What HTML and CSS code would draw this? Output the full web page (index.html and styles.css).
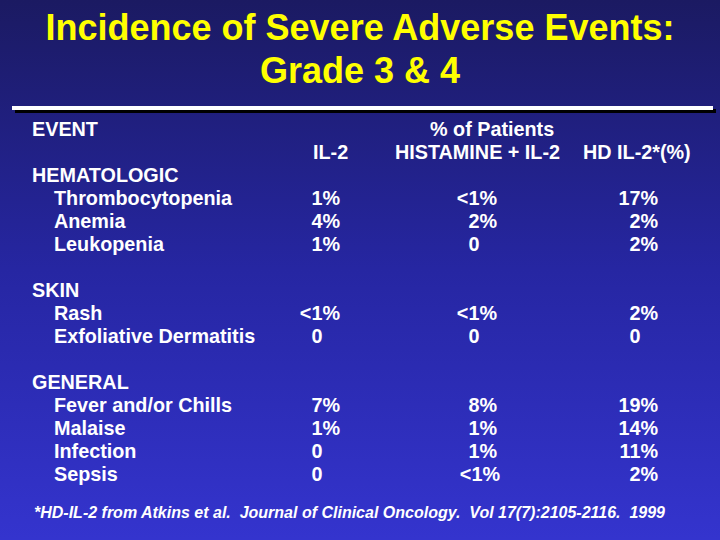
FILE: index.html
```html
<!DOCTYPE html>
<html lang="en">
<head>
<meta charset="utf-8">
<title>Incidence of Severe Adverse Events</title>
<link rel="stylesheet" href="styles.css">
</head>
<body>
<div class="slide">
  <h1 class="title">Incidence of Severe Adverse Events:<br>Grade 3 &amp; 4</h1>
  <div class="rule"></div>
  <div class="head">
    <div class="lbl">EVENT</div>
    <div></div>
    <div class="pct">% of Patients</div>
    <div></div>
    <div></div>
    <div>IL-2</div>
    <div>HISTAMINE + IL-2</div>
    <div>HD IL-2*(%)</div>
  </div>
  <div class="table">
    <div class="group">HEMATOLOGIC</div>
    <div class="sub">Thrombocytopenia</div><div class="v">1%</div><div class="v">&lt;1%</div><div class="v">17%</div>
    <div class="sub">Anemia</div><div class="v">4%</div><div class="v">2%</div><div class="v">2%</div>
    <div class="sub">Leukopenia</div><div class="v">1%</div><div class="v"><span class="z">0</span></div><div class="v">2%</div>
    <div class="gap"></div>
    <div class="group">SKIN</div>
    <div class="sub">Rash</div><div class="v">&lt;1%</div><div class="v">&lt;1%</div><div class="v">2%</div>
    <div class="sub">Exfoliative Dermatitis</div><div class="v"><span class="z">0</span></div><div class="v"><span class="z">0</span></div><div class="v"><span class="z">0</span></div>
    <div class="gap"></div>
    <div class="group">GENERAL</div>
    <div class="sub">Fever and/or Chills</div><div class="v">7%</div><div class="v">8%</div><div class="v">19%</div>
    <div class="sub">Malaise</div><div class="v">1%</div><div class="v">1%</div><div class="v">14%</div>
    <div class="sub">Infection</div><div class="v"><span class="z">0</span></div><div class="v">1%</div><div class="v">11%</div>
    <div class="sub">Sepsis</div><div class="v"><span class="z">0</span></div><div class="v sep">&lt;1%</div><div class="v">2%</div>
  </div>
  <p class="note">*HD-IL-2 from Atkins et al.  Journal of Clinical Oncology.  Vol 17(7):2105-2116.  1999</p>
</div>
</body>
</html>
```
FILE: styles.css
```css
html, body {
  margin: 0;
  padding: 0;
}
body {
  width: 720px;
  height: 540px;
  overflow: hidden;
  background: linear-gradient(to bottom, #1b1a62 0%, #2626a2 50%, #3434ce 100%);
  font-family: "Liberation Sans", Arial, sans-serif;
  font-weight: bold;
  color: #ffffff;
}
.slide {
  width: 720px;
  height: 540px;
  padding-top: 6px;
  box-sizing: border-box;
}
.title {
  margin: 0;
  font-size: 36px;
  line-height: 43px;
  font-weight: bold;
  color: #ffff00;
  text-align: center;
}
.rule {
  height: 4px;
  margin: 14px 7px 0 12px;
  background: #ffffff;
  box-shadow: 3px 3px 0 #000000;
}
.head {
  display: grid;
  grid-template-columns: 281px 82px 188px auto;
  grid-auto-rows: 23px;
  margin-top: 8px;
  padding-left: 32px;
  font-size: 19.8px;
  line-height: 23px;
  white-space: nowrap;
}
.pct {
  padding-left: 35px;
}
.table {
  display: grid;
  grid-template-columns: 250px 58px 157px 161px;
  grid-auto-rows: 23px;
  padding-left: 32px;
  font-size: 19.8px;
  line-height: 23px;
  white-space: nowrap;
}
.group {
  grid-column: 1 / -1;
}
.gap {
  grid-column: 1 / -1;
}
.sub {
  padding-left: 22px;
}
.v {
  text-align: right;
}
.z {
  padding-right: 0.889em;
}
.sep {
  margin-right: -3px;
}
.note {
  margin: 17px 0 0 34px;
  font-size: 16px;
  line-height: 20px;
  font-style: italic;
  font-weight: bold;
  white-space: pre;
}
```
